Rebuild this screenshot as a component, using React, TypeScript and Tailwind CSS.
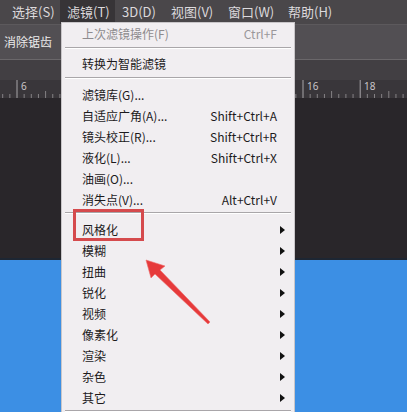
const cjk = { fontFamily: '"Noto Sans CJK SC", "Noto Sans", sans-serif' };

type Item = { label: string; shortcut?: string; sub?: boolean; disabled?: boolean };

const group1: Item[] = [{ label: "上次滤镜操作(F)", shortcut: "Ctrl+F", disabled: true }];
const group2: Item[] = [{ label: "转换为智能滤镜" }];
const group3: Item[] = [
  { label: "滤镜库(G)..." },
  { label: "自适应广角(A)...", shortcut: "Shift+Ctrl+A" },
  { label: "镜头校正(R)...", shortcut: "Shift+Ctrl+R" },
  { label: "液化(L)...", shortcut: "Shift+Ctrl+X" },
  { label: "油画(O)..." },
  { label: "消失点(V)...", shortcut: "Alt+Ctrl+V" },
];
const group4: Item[] = ["风格化", "模糊", "扭曲", "锐化", "视频", "像素化", "渲染", "杂色", "其它"].map((l) => ({
  label: l,
  sub: true,
}));

function MenuRow({ item }: { item: Item }) {
  return (
    <div className="h-[21px] flex items-center pl-[20px] pr-[17px]">
      <span className={item.disabled ? "text-[#8e8b8e]" : "text-[#1c1a1c]"}>{item.label}</span>
      <span className="flex-1" />
      {item.shortcut && (
        <span className={item.disabled ? "text-[#9a979a]" : "text-[#1c1a1c]"}>{item.shortcut}</span>
      )}
      {item.sub && (
        <svg width="5" height="8" viewBox="0 0 5 8" className="mr-[-8px]">
          <path d="M0 0 L5 4 L0 8 Z" fill="#111" />
        </svg>
      )}
    </div>
  );
}

function Sep({ cls }: { cls: string }) {
  return (
    <div className={cls + " mx-[3px]"}>
      <div className="h-px bg-[#a9a6a9]" />
      <div className="h-px bg-white" />
    </div>
  );
}

function Ruler() {
  const ticks = [];
  for (let i = -2; i < 60; i++) {
    const x = 17 + i * 7.15;
    if (x < 0 || x > 407) continue;
    const major = i % 8 === 0;
    const mid = i % 4 === 0;
    ticks.push(
      <line
        key={i}
        x1={x}
        x2={x}
        y1={major ? 0 : mid ? 11 : 14}
        y2={18}
        stroke={major ? "#a8a5a8" : "#858285"}
        strokeWidth="1"
      />
    );
  }
  // 只画菜单外露出的刻度数字
  const labels = [
    { n: 6, x: 21 },
    { n: 16, x: 307 },
    { n: 18, x: 364 },
  ];
  return (
    <svg width="407" height="18" className="block">
      {ticks}
      {labels.map((l) => (
        <text key={l.n} x={l.x} y={10} fontSize="10" fill="#c9c6c9" fontFamily="Noto Sans, sans-serif">
          {l.n}
        </text>
      ))}
    </svg>
  );
}

export default function App() {
  return (
    <div className="relative w-[407px] h-[412px] overflow-hidden bg-[#29262a]" style={cjk}>
      {/* 背景界面 */}
      <div className="flex flex-col h-full">
        <div className="h-[25px] bg-[#4a474a] border-b border-[#5c595c] flex items-center text-[13px] text-[#dcd9dc]">
          <span className="ml-[12px] w-[48px]">选择(S)</span>
          <span className="h-[24px] w-[55px] bg-[#373437] flex items-center pl-[7px]">滤镜(T)</span>
          <span className="ml-[7px] w-[49px]">3D(D)</span>
          <span className="w-[57px]">视图(V)</span>
          <span className="w-[60px]">窗口(W)</span>
          <span>帮助(H)</span>
        </div>
        <div className="h-[35px] bg-[#524f53] border-b border-[#6a676a] flex items-center pl-[4px] text-[12px] text-[#ecebec]">
          消除锯齿
        </div>
        <div className="h-[20px] bg-[#423f43]" />
        <div className="h-[18px] bg-[#39363a]">
          <Ruler />
        </div>
        <div className="h-[162px] bg-[#29262a] border-b-2 border-[#1d2633]" />
        <div className="flex-1 bg-[#3c8fe4]" />
      </div>

      {/* 滤镜菜单 */}
      <div className="absolute left-[61px] top-[22px] w-[234px] h-[392px] bg-[#f1eef1] border border-[#c9c6c9] text-[12px]">
        {group1.map((it) => (
          <MenuRow key={it.label} item={it} />
        ))}
        <Sep cls="mt-[3px] mb-[4px]" />
        {group2.map((it) => (
          <MenuRow key={it.label} item={it} />
        ))}
        <Sep cls="mt-[3px] mb-[5px]" />
        {group3.map((it) => (
          <MenuRow key={it.label} item={it} />
        ))}
        <Sep cls="mt-[2px] mb-[5px]" />
        {group4.map((it) => (
          <MenuRow key={it.label} item={it} />
        ))}
        <Sep cls="mt-[2px]" />
      </div>

      {/* 标注 */}
      <div className="absolute left-[73px] top-[209px] w-[71px] h-[32px] border-[3px] border-[#d54a4d]" />
      <svg className="absolute left-0 top-0 pointer-events-none" width="407" height="412">
        <polygon
          points="146,260 165,266 160,270 210,322 208,324 155,274 151,278"
          fill="#e63a3b"
          stroke="#ef6b6b"
          strokeWidth="0.6"
          strokeLinejoin="round"
        />
      </svg>
    </div>
  );
}
